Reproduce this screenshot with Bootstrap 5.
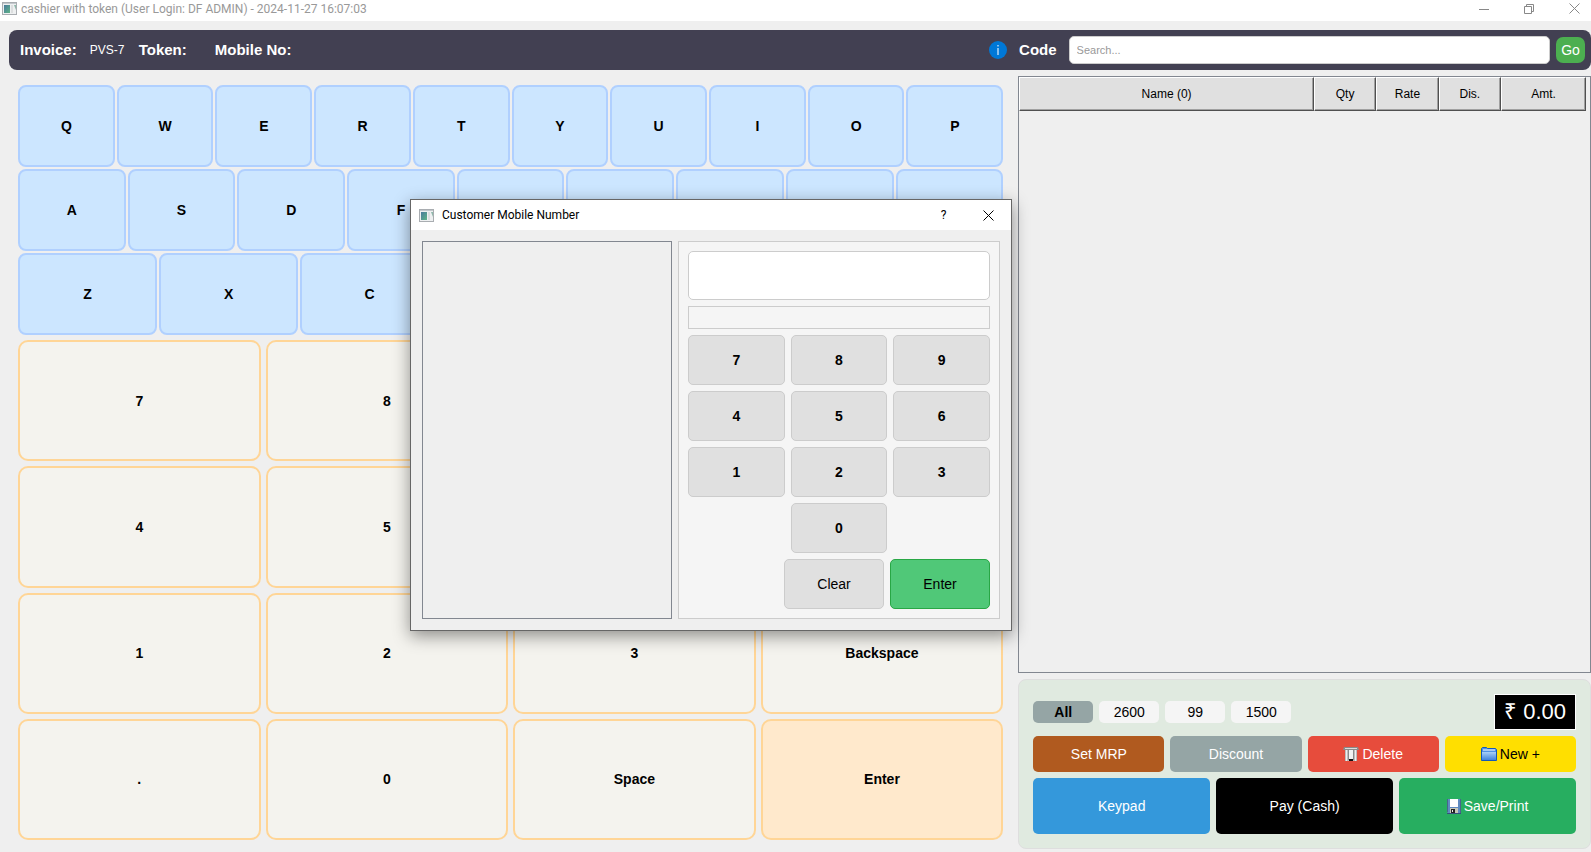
<!DOCTYPE html>
<html lang="en">
<head>
<meta charset="utf-8">
<meta name="viewport" content="width=device-width, initial-scale=1">
<title>cashier with token</title>
<link href="https://cdn.jsdelivr.net/npm/bootstrap@5.3.0/dist/css/bootstrap.min.css" rel="stylesheet">
<style>
  body { font-family: "Liberation Sans", Arial, sans-serif; font-size: 14px; line-height: 20px; color: #000; background: #efefef; }
  button { font-family: inherit; color: inherit; }
  .app { min-height: 100vh; }
  .win-title { font-family: Roboto, "Open Sans", sans-serif; font-size: 12px; }
  .win-bar { height: 21px; padding: 0 2px 4px; color: #999; }
  .win-btn { width: 45px; height: 100%; padding: 0; border: 0; background: none; display: flex; align-items: center; justify-content: center; }
  .win-bar .win-btn:last-child { width: 30px; margin-left: 8px; }
  .topbar { height: 40px; margin: 9px 0 0 9px; padding: 0 6px 0 11px; border-radius: 8px; background: #424052; color: #fff; }
  .topbar .lbl { font-size: 15px; font-weight: 700; }
  .topbar .inv { font-size: 12px; width: 36px; margin: 0 13px; white-space: nowrap; }
  .code-form { width: 33%; }
  .search { height: 28px; min-width: 0; padding: 0 7px; font-size: 11px; border: 1px solid #ccc; border-radius: 5px; background: #fff; }
  .search::placeholder { color: #999; }
  .go { width: 29px; height: 26px; padding: 0; border: 0; border-radius: 7px; background: #4caf50; color: #fff; }
  .keys-col { flex: 0 0 64%; padding: 15px 15px 12px 18px; gap: 5px; }
  .side-col { flex: 1 1 0; min-width: 0; padding: 6px 0 3px; }
  .pad-letters { flex: 250 1 0; gap: 2px; }
  .pad-letters > div { gap: 2px; }
  .pad-digits { flex: 500 1 0; display: grid; grid-template-columns: repeat(4, minmax(0, 1fr)); grid-auto-rows: 1fr; gap: 5px; }
  .key { padding: 0; font-size: 14px; font-weight: 700; }
  .pad-letters .key { flex: 1 1 0; border: 2px solid #b0d0ff; border-radius: 8px; background: #cce6ff; }
  .pad-digits .key { border: 2px solid #ffd596; border-radius: 10px; background: #f4f3ee; }
  .pad-digits .key-enter { background: #ffe9cc; }
  .bill { border: 1px solid #828790; padding-right: 4px; }
  .bill table { width: 100%; table-layout: fixed; border-collapse: separate; border-spacing: 0; }
  .bill th { height: 34px; font-size: 12px; font-weight: 400; text-align: center; background: #e0e0e0; border-style: solid; border-width: 1px; border-color: #fff #505050 #505050 #fff; box-shadow: inset -1px -1px #a0a0a0; }
  .actions { margin-top: 6px; padding: 14px; border: 1px solid #dedede; border-radius: 8px; background: #e0eae0; }
  .gap-6 { gap: 6px; }
  .chip { width: 60px; height: 22px; padding: 0; border: 0; border-radius: 5px; background: #f5f5f5; }
  .chip.on { background: #95a5a5; font-weight: 700; }
  .total { height: 36px; padding: 0 9px; border: 1px solid #fff; background: #000; color: #fff; font-size: 22px; line-height: 34px; }
  .act { flex: 1 1 0; height: 36px; padding: 0; border: 0; border-radius: 5px; color: #fff; display: flex; align-items: center; justify-content: center; gap: 3px; }
  .act-tall { height: 56px; }
  .c-mrp { background: #b05a1f; } .c-disc { background: #95a5a5; } .c-del { background: #e74c3c; }
  .c-new { background: #ffdf00; color: #000; } .c-keypad { background: #3498db; } .c-pay { background: #000; } .c-save { background: #27ae60; }
  .dlg { position: absolute; left: 410px; top: 199px; width: 602px; border: 1px solid #666; background: #efefef; box-shadow: 0 5px 16px rgba(0,0,0,.42); }
  .dlg-bar { height: 30px; padding-left: 8px; background: #fff; }
  .dlg-body { padding: 11px; gap: 6px; }
  .dlg-list { flex: 0 0 250px; border: 1px solid #828790; }
  .dlg-pad { flex: 1 1 0; padding: 9px; border: 1px solid #ccc; background: #f5f5f5; }
  .dlg-input { width: 100%; height: 49px; padding: 0 10px; border: 1px solid #ccc; border-radius: 5px; background: #fff; font-size: 15px; }
  .dlg-out { height: 23px; border: 1px solid #ccc; }
  .dlg-grid { display: grid; grid-template-columns: repeat(3, minmax(0, 1fr)); gap: 6px; }
  .dkey { height: 50px; padding: 0; border: 1px solid #ccc; border-radius: 5px; background: #e0e0e0; }
  .dlg-grid .dkey { font-weight: 700; }
  .dkey-wide { width: 100px; }
  .dkey-ok { background: #50c878; border-color: #28a745; }
  .zero { grid-column: 2; }
</style>
</head>
<body>
<svg width="0" height="0" class="position-absolute" aria-hidden="true">
  <defs>
    <linearGradient id="scr" x1="0" y1="0" x2="1" y2="1"><stop offset="0" stop-color="#4a7a9c"/><stop offset="1" stop-color="#5fb487"/></linearGradient>
    <symbol id="app-icon" viewBox="0 0 15 13">
      <rect x="0.5" y="0.5" width="14" height="12" fill="#eef0f1" stroke="#a9adb1"/>
      <rect x="1" y="1" width="13" height="1" fill="#c3c8cc"/>
      <rect x="2" y="3" width="6" height="8" fill="url(#scr)"/>
      <rect x="9" y="3" width="2" height="8" fill="#dcdedf"/>
      <path d="M12 3h2v5z" fill="#8fb8ab"/>
    </symbol>
  </defs>
</svg>

<div class="app d-flex flex-column">
  <div class="win-bar win-title d-flex align-items-center bg-white">
    <svg width="15" height="13" class="flex-shrink-0"><use href="#app-icon"/></svg>
    <span class="ms-1 me-auto text-nowrap">cashier with token (User Login: DF ADMIN) - 2024-11-27 16:07:03</span>
    <button class="win-btn" aria-label="Minimize"><svg width="10" height="10"><path d="M0 5.500h10" stroke="#888"/></svg></button>
    <button class="win-btn" aria-label="Restore"><svg width="10" height="10" fill="none" stroke="#888"><path d="M.5 2.500h7v7h-7zM2.500 2.500v-2h7v7h-2"/></svg></button>
    <button class="win-btn" aria-label="Close"><svg width="11" height="11"><path d="M.5.5l10 10M10.500.5l-10 10" stroke="#888"/></svg></button>
  </div>

  <header class="topbar d-flex align-items-center">
    <span class="lbl">Invoice:</span><span class="inv">PVS-7</span>
    <span class="lbl">Token:</span><span class="lbl ms-4 ps-1 me-auto">Mobile No:</span>
    <svg width="18" height="18" class="flex-shrink-0" role="img" aria-label="Info"><circle cx="9" cy="9" r="9" fill="#0078d7"/><path d="M9 7v7M9 4v1.500" stroke="#cfe6fa" stroke-width="1.300"/></svg>
    <label for="code" class="lbl mx-2 px-1">Code</label>
    <form class="code-form d-flex align-items-center gap-6" onsubmit="return false">
      <input id="code" class="search flex-grow-1" type="text" placeholder="Search...">
      <button class="go">Go</button>
    </form>
  </header>

  <div class="d-flex flex-grow-1">
    <main class="keys-col d-flex flex-column">
      <div class="pad-letters d-flex flex-column">
        <div class="d-flex flex-fill">
          <button class="key">Q</button><button class="key">W</button><button class="key">E</button><button class="key">R</button><button class="key">T</button><button class="key">Y</button><button class="key">U</button><button class="key">I</button><button class="key">O</button><button class="key">P</button>
        </div>
        <div class="d-flex flex-fill">
          <button class="key">A</button><button class="key">S</button><button class="key">D</button><button class="key">F</button><button class="key"></button><button class="key"></button><button class="key"></button><button class="key"></button><button class="key"></button>
        </div>
        <div class="d-flex flex-fill">
          <button class="key">Z</button><button class="key">X</button><button class="key">C</button><button class="key"></button><button class="key"></button><button class="key"></button><button class="key"></button>
        </div>
      </div>
      <div class="pad-digits">
        <button class="key">7</button><button class="key">8</button><button class="key"></button><button class="key"></button>
        <button class="key">4</button><button class="key">5</button><button class="key"></button><button class="key"></button>
        <button class="key">1</button><button class="key">2</button><button class="key">3</button><button class="key">Backspace</button>
        <button class="key">.</button><button class="key">0</button><button class="key">Space</button><button class="key key-enter">Enter</button>
      </div>
    </main>

    <aside class="side-col d-flex flex-column">
      <div class="bill flex-grow-1">
        <table>
          <colgroup><col style="width:52%"><col style="width:11%"><col style="width:11%"><col style="width:11%"><col style="width:15%"></colgroup>
          <thead><tr><th>Name (0)</th><th>Qty</th><th>Rate</th><th>Dis.</th><th>Amt.</th></tr></thead>
        </table>
      </div>
      <section class="actions d-flex flex-column gap-6">
        <div class="d-flex align-items-center gap-6">
          <button class="chip on">All</button><button class="chip">2600</button><button class="chip">99</button><button class="chip">1500</button>
          <div class="total ms-auto">₹ 0.00</div>
        </div>
        <div class="d-flex gap-6">
          <button class="act c-mrp">Set MRP</button>
          <button class="act c-disc">Discount</button>
          <button class="act c-del">
            <svg width="16" height="16" viewBox="0 0 16 16"><path d="M2 3h12v12H2z" fill="#bdbdbd"/><path d="M3.500 3v12M12.500 3v12" stroke="#eee"/><path d="M6 3h4v10H6z" fill="#f2f2f2"/><path d="M5.500 3v11M10.500 3v11" stroke="#8a8a8a"/><path d="M1 1h14l1 3H0z" fill="#8a8a8a"/><path d="M2 2h12v1H2z" fill="#dcdcdc"/><path d="M6 13h4v2H6z" fill="#111"/></svg>Delete</button>
          <button class="act c-new">
            <svg width="16" height="14" viewBox="0 0 16 14"><defs><linearGradient id="fold" x1="0" y1="0" x2="0" y2="1"><stop offset="0" stop-color="#a9d0f7"/><stop offset="1" stop-color="#3f83dc"/></linearGradient></defs><path d="M.5 13.500V1.500l1-1h4l1 1h8l1 1v11z" fill="#4f92e4" stroke="#1459b8"/><path d="M2 3h12" stroke="#fff"/><path d="M1 5h14v8H1z" fill="url(#fold)"/></svg>New +</button>
        </div>
        <div class="d-flex gap-6">
          <button class="act act-tall c-keypad">Keypad</button>
          <button class="act act-tall c-pay">Pay (Cash)</button>
          <button class="act act-tall c-save">
            <svg width="14" height="16" viewBox="0 0 14 16"><path d="M0 1h14v14H1l-1-1z" fill="#5f8ac0"/><path d="M.5 1v13M13.500 1v14" stroke="#48648c"/><path d="M0 15.500h14" stroke="#35507a"/><rect x="3" y="1" width="8" height="8" fill="#fff"/><rect x="3" y="10" width="8" height="5" fill="#c8c8b8"/><rect x="4" y="11" width="4" height="4" fill="#222"/><rect x="5" y="12" width="1" height="2" fill="#eee"/></svg>Save/Print</button>
        </div>
      </section>
    </aside>
  </div>
</div>

<div class="dlg" role="dialog" aria-labelledby="dlg-title">
  <div class="dlg-bar win-title d-flex align-items-center">
    <svg width="15" height="13"><use href="#app-icon"/></svg>
    <span id="dlg-title" class="ms-1 ps-1 me-auto">Customer Mobile Number</span>
    <button class="win-btn" aria-label="Help">?</button>
    <button class="win-btn" aria-label="Close"><svg width="11" height="11"><path d="M.5.5l10 10M10.500.5l-10 10" stroke="#000"/></svg></button>
  </div>
  <div class="dlg-body d-flex">
    <div class="dlg-list"></div>
    <div class="dlg-pad d-flex flex-column gap-6">
      <input class="dlg-input" type="tel" aria-label="Customer Mobile Number">
      <div class="dlg-out"></div>
      <div class="dlg-grid">
        <button class="dkey">7</button><button class="dkey">8</button><button class="dkey">9</button>
        <button class="dkey">4</button><button class="dkey">5</button><button class="dkey">6</button>
        <button class="dkey">1</button><button class="dkey">2</button><button class="dkey">3</button>
        <button class="dkey zero">0</button>
      </div>
      <div class="d-flex justify-content-end gap-6">
        <button class="dkey dkey-wide">Clear</button><button class="dkey dkey-wide dkey-ok">Enter</button>
      </div>
    </div>
  </div>
</div>
<script src="https://cdn.jsdelivr.net/npm/bootstrap@5.3.0/dist/js/bootstrap.bundle.min.js"></script>
</body>
</html>
